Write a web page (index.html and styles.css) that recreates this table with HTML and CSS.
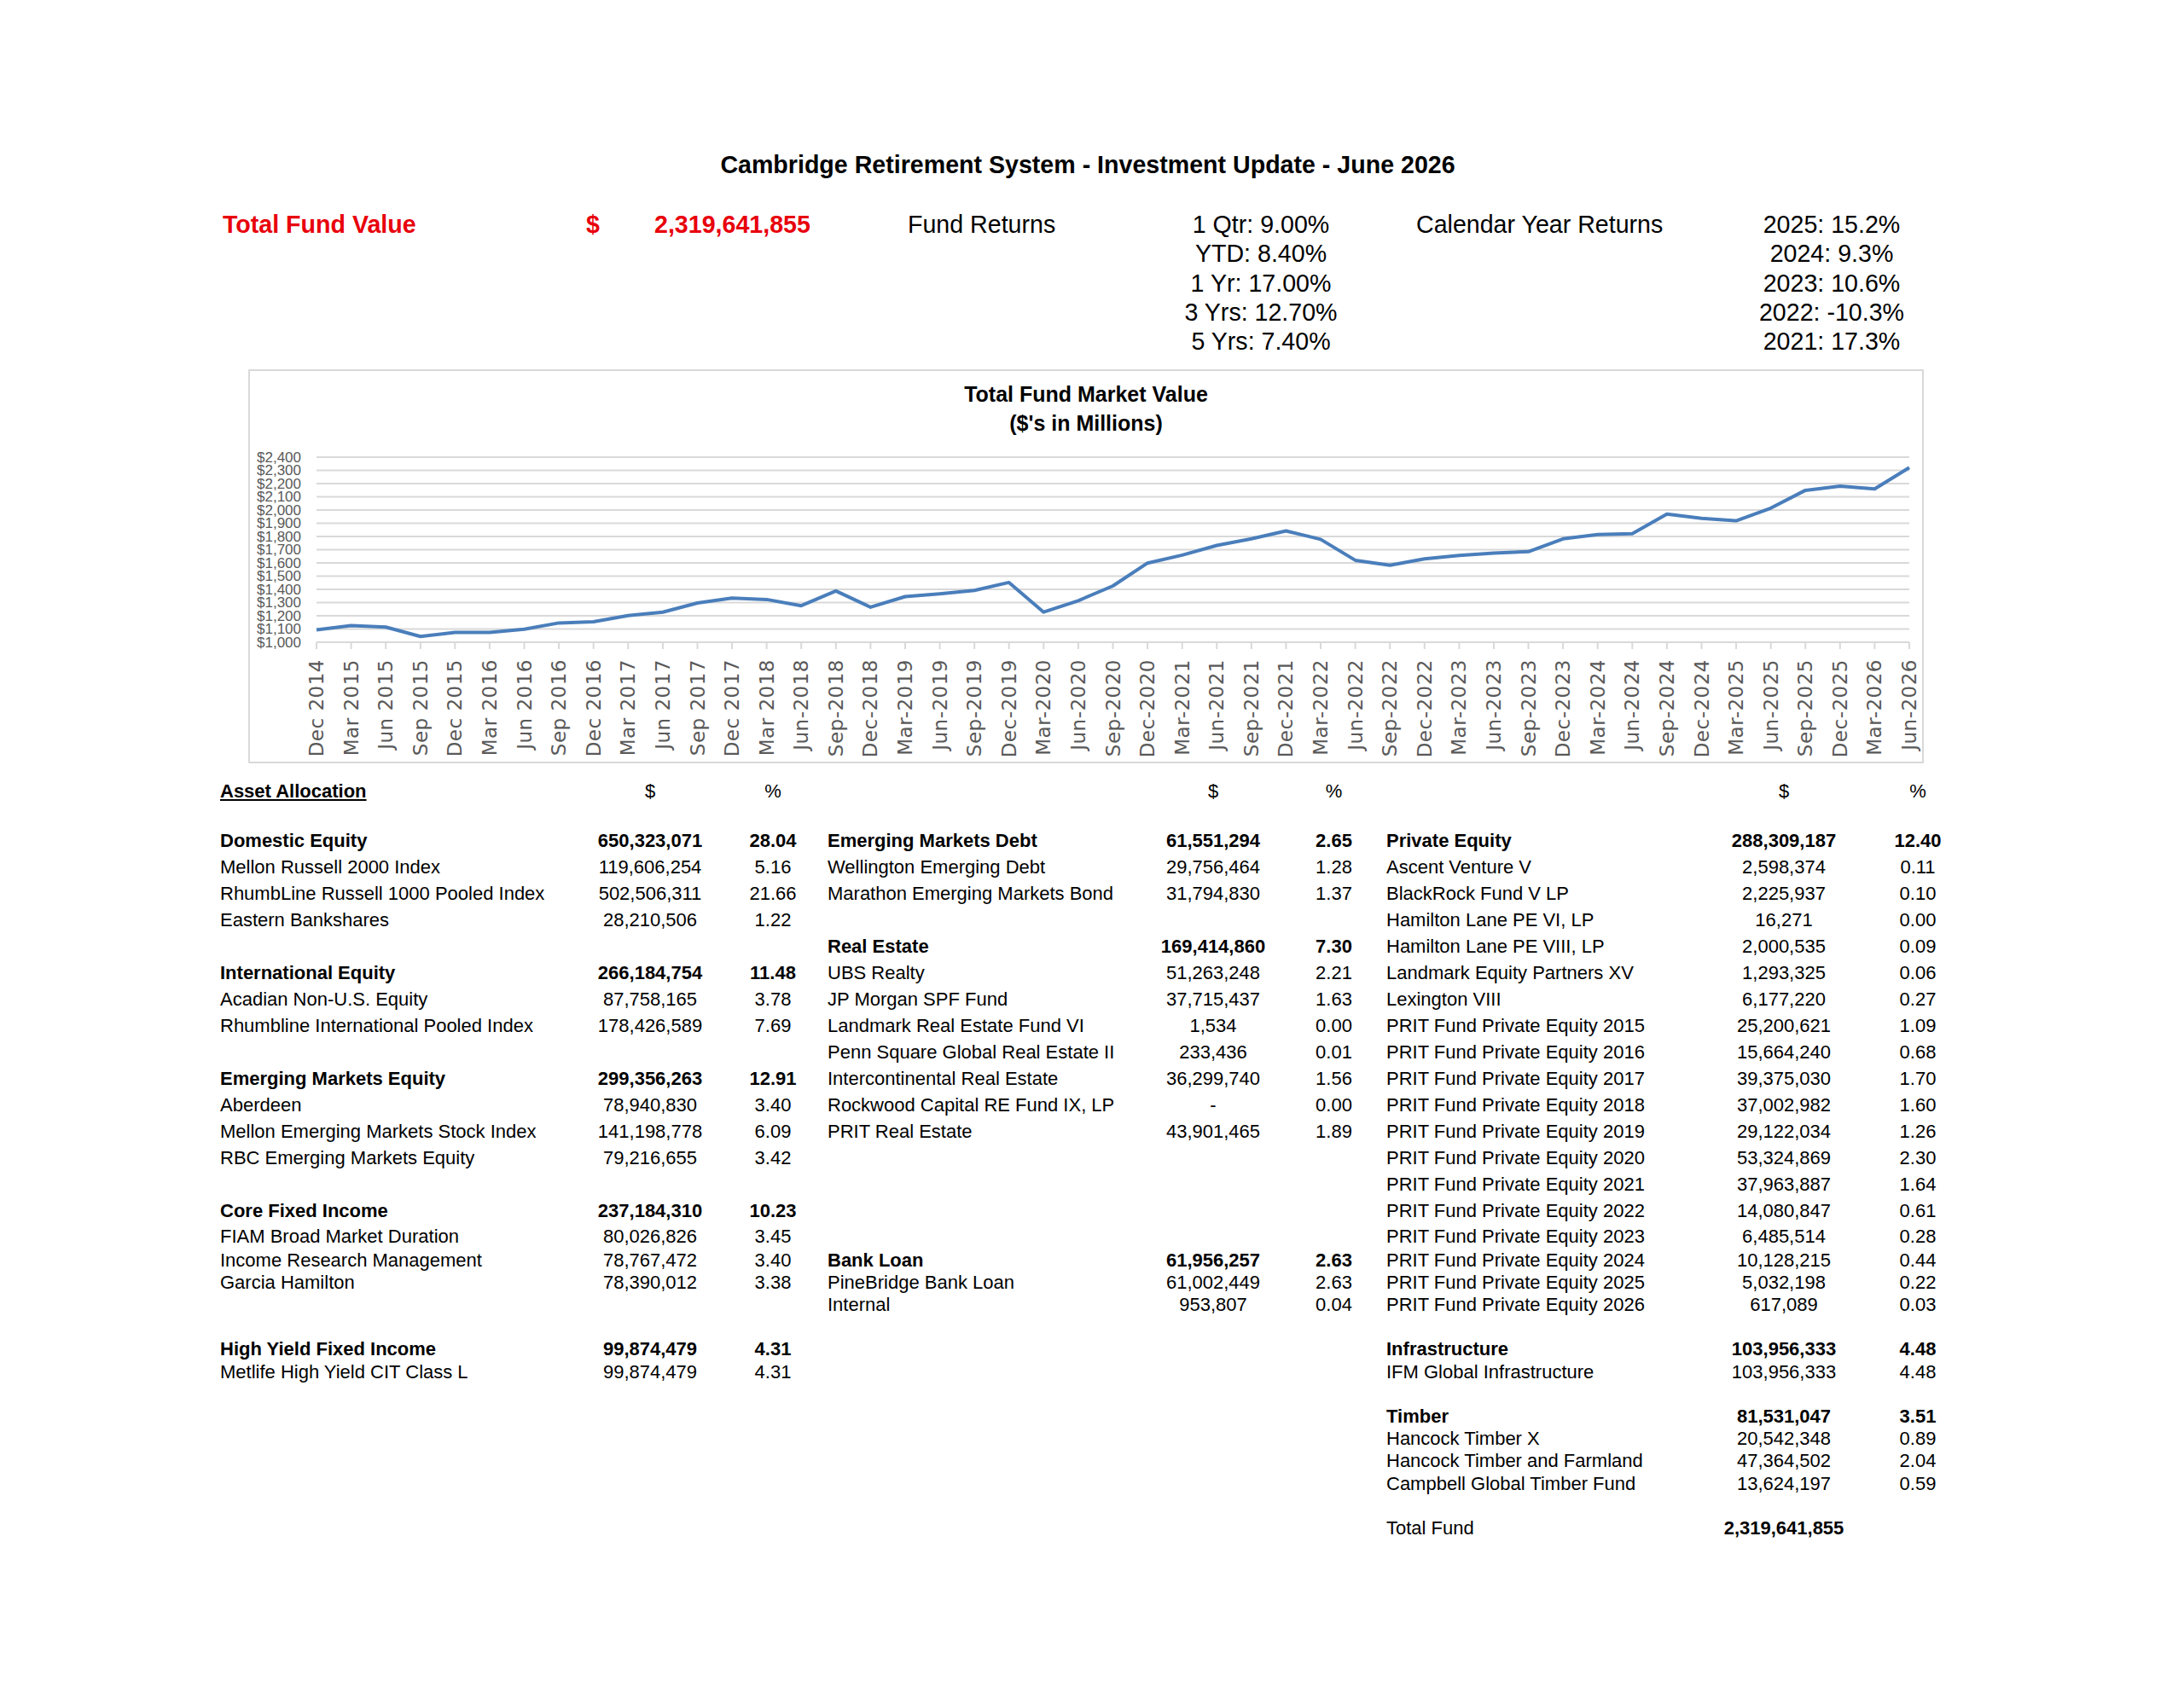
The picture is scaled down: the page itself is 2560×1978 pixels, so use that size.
FILE: index.html
```html
<!DOCTYPE html>
<html lang="en">
<head>
    <meta charset="UTF-8">
    <title>Cambridge Retirement System - Investment Update</title>
    <link rel="stylesheet" href="styles.css">
</head>
<body>
    <h1 class="title">Cambridge Retirement System - Investment Update - June 2026</h1>

    <div class="summary">
        <div class="total-label">Total Fund Value</div>
        <div class="total-cur">$</div>
        <div class="total-num">2,319,641,855</div>
        <div class="ret-label">Fund Returns</div>
        <div class="ret-list fund">
            <div>1 Qtr: 9.00%</div>
            <div>YTD: 8.40%</div>
            <div>1 Yr: 17.00%</div>
            <div>3 Yrs: 12.70%</div>
            <div>5 Yrs: 7.40%</div>
        </div>
        <div class="cal-label">Calendar Year Returns</div>
        <div class="ret-list cal">
            <div>2025: 15.2%</div>
            <div>2024: 9.3%</div>
            <div>2023: 10.6%</div>
            <div>2022: -10.3%</div>
            <div>2021: 17.3%</div>
        </div>
    </div>

    <div class="chart">
        <div class="chart-title">Total Fund Market Value<br>($'s in Millions)</div>
        <svg class="plot" width="1960" height="380" viewBox="0 0 1960 380">
            <g class="grid">
                <line x1="78" x2="1945" y1="23" y2="23"/>
                <line x1="78" x2="1945" y1="38.5" y2="38.5"/>
                <line x1="78" x2="1945" y1="54" y2="54"/>
                <line x1="78" x2="1945" y1="69.5" y2="69.5"/>
                <line x1="78" x2="1945" y1="85" y2="85"/>
                <line x1="78" x2="1945" y1="100.5" y2="100.5"/>
                <line x1="78" x2="1945" y1="116" y2="116"/>
                <line x1="78" x2="1945" y1="131.5" y2="131.5"/>
                <line x1="78" x2="1945" y1="147" y2="147"/>
                <line x1="78" x2="1945" y1="162.5" y2="162.5"/>
                <line x1="78" x2="1945" y1="178" y2="178"/>
                <line x1="78" x2="1945" y1="193.5" y2="193.5"/>
                <line x1="78" x2="1945" y1="209" y2="209"/>
                <line x1="78" x2="1945" y1="224.5" y2="224.5"/>
                <line x1="78" x2="1945" y1="240" y2="240"/>
            </g>
            <g class="ylabels">
                <text x="60" y="23">$2,400</text>
                <text x="60" y="38.5">$2,300</text>
                <text x="60" y="54">$2,200</text>
                <text x="60" y="69.5">$2,100</text>
                <text x="60" y="85">$2,000</text>
                <text x="60" y="100.5">$1,900</text>
                <text x="60" y="116">$1,800</text>
                <text x="60" y="131.5">$1,700</text>
                <text x="60" y="147">$1,600</text>
                <text x="60" y="162.5">$1,500</text>
                <text x="60" y="178">$1,400</text>
                <text x="60" y="193.5">$1,300</text>
                <text x="60" y="209">$1,200</text>
                <text x="60" y="224.5">$1,100</text>
                <text x="60" y="240">$1,000</text>
            </g>
            <g id="ticks" class="ticks"></g>
            <g id="xlabels" class="xlabels"></g>
            <polyline class="series" points="78,225.6 118.6,220.6 159.2,222.3 199.8,233.3 240.3,228.4 280.9,228.4 321.5,224.7 362.1,217.4 402.7,216 443.3,208.7 483.9,204.7 524.5,194 565,188.2 605.6,189.9 646.2,197.2 686.8,179.9 727.4,198.9 768,186.5 808.6,183.3 849.2,179.2 889.7,169.9 930.3,204.7 970.9,191.3 1011.5,174 1052.1,147.2 1092.7,137.9 1133.3,126.5 1173.8,118.8 1214.4,109.5 1255,119.4 1295.6,143.9 1336.2,149.8 1376.8,142.2 1417.4,138.2 1458,135.5 1498.5,133.8 1539.1,118.8 1579.7,113.8 1620.3,112.7 1660.9,89.8 1701.5,94.8 1742.1,97.6 1782.6,82.8 1823.2,61.9 1863.8,56.9 1904.4,60.2 1945,35.2"/>
        </svg>
    </div>

    <div class="alloc">
        <div class="block b1">
            <div class="hd">Asset Allocation</div><div class="num">$</div><div class="num">%</div>
            <div class="gap"></div>
            <div class="b">Domestic Equity</div><div class="num b">650,323,071</div><div class="num b">28.04</div>
            <div>Mellon Russell 2000 Index</div><div class="num">119,606,254</div><div class="num">5.16</div>
            <div>RhumbLine Russell 1000 Pooled Index</div><div class="num">502,506,311</div><div class="num">21.66</div>
            <div>Eastern Bankshares</div><div class="num">28,210,506</div><div class="num">1.22</div>
            <div class="gap"></div>
            <div class="b">International Equity</div><div class="num b">266,184,754</div><div class="num b">11.48</div>
            <div>Acadian Non-U.S. Equity</div><div class="num">87,758,165</div><div class="num">3.78</div>
            <div>Rhumbline International Pooled Index</div><div class="num">178,426,589</div><div class="num">7.69</div>
            <div class="gap"></div>
            <div class="b">Emerging Markets Equity</div><div class="num b">299,356,263</div><div class="num b">12.91</div>
            <div>Aberdeen</div><div class="num">78,940,830</div><div class="num">3.40</div>
            <div>Mellon Emerging Markets Stock Index</div><div class="num">141,198,778</div><div class="num">6.09</div>
            <div>RBC Emerging Markets Equity</div><div class="num">79,216,655</div><div class="num">3.42</div>
            <div class="gap"></div>
            <div class="b">Core Fixed Income</div><div class="num b">237,184,310</div><div class="num b">10.23</div>
            <div>FIAM Broad Market Duration</div><div class="num">80,026,826</div><div class="num">3.45</div>
            <div>Income Research Management</div><div class="num">78,767,472</div><div class="num">3.40</div>
            <div>Garcia Hamilton</div><div class="num">78,390,012</div><div class="num">3.38</div>
            <div class="gap"></div>
            <div class="gap"></div>
            <div class="b">High Yield Fixed Income</div><div class="num b">99,874,479</div><div class="num b">4.31</div>
            <div>Metlife High Yield CIT Class L</div><div class="num">99,874,479</div><div class="num">4.31</div>
        </div>

        <div class="block b2">
            <div></div><div class="num">$</div><div class="num">%</div>
            <div class="gap"></div>
            <div class="b">Emerging Markets Debt</div><div class="num b">61,551,294</div><div class="num b">2.65</div>
            <div>Wellington Emerging Debt</div><div class="num">29,756,464</div><div class="num">1.28</div>
            <div>Marathon Emerging Markets Bond</div><div class="num">31,794,830</div><div class="num">1.37</div>
            <div class="gap"></div>
            <div class="b">Real Estate</div><div class="num b">169,414,860</div><div class="num b">7.30</div>
            <div>UBS Realty</div><div class="num">51,263,248</div><div class="num">2.21</div>
            <div>JP Morgan SPF Fund</div><div class="num">37,715,437</div><div class="num">1.63</div>
            <div>Landmark Real Estate Fund VI</div><div class="num">1,534</div><div class="num">0.00</div>
            <div>Penn Square Global Real Estate II</div><div class="num">233,436</div><div class="num">0.01</div>
            <div>Intercontinental Real Estate</div><div class="num">36,299,740</div><div class="num">1.56</div>
            <div>Rockwood Capital RE Fund IX, LP</div><div class="num">-</div><div class="num">0.00</div>
            <div>PRIT Real Estate</div><div class="num">43,901,465</div><div class="num">1.89</div>
            <div class="gap"></div>
            <div class="gap"></div>
            <div class="gap"></div>
            <div class="gap"></div>
            <div class="b">Bank Loan</div><div class="num b">61,956,257</div><div class="num b">2.63</div>
            <div>PineBridge Bank Loan</div><div class="num">61,002,449</div><div class="num">2.63</div>
            <div>Internal</div><div class="num">953,807</div><div class="num">0.04</div>
        </div>

        <div class="block b3">
            <div></div><div class="num">$</div><div class="num">%</div>
            <div class="gap"></div>
            <div class="b">Private Equity</div><div class="num b">288,309,187</div><div class="num b">12.40</div>
            <div>Ascent Venture V</div><div class="num">2,598,374</div><div class="num">0.11</div>
            <div>BlackRock Fund V LP</div><div class="num">2,225,937</div><div class="num">0.10</div>
            <div>Hamilton Lane PE VI, LP</div><div class="num">16,271</div><div class="num">0.00</div>
            <div>Hamilton Lane PE VIII, LP</div><div class="num">2,000,535</div><div class="num">0.09</div>
            <div>Landmark Equity Partners XV</div><div class="num">1,293,325</div><div class="num">0.06</div>
            <div>Lexington VIII</div><div class="num">6,177,220</div><div class="num">0.27</div>
            <div>PRIT Fund Private Equity 2015</div><div class="num">25,200,621</div><div class="num">1.09</div>
            <div>PRIT Fund Private Equity 2016</div><div class="num">15,664,240</div><div class="num">0.68</div>
            <div>PRIT Fund Private Equity 2017</div><div class="num">39,375,030</div><div class="num">1.70</div>
            <div>PRIT Fund Private Equity 2018</div><div class="num">37,002,982</div><div class="num">1.60</div>
            <div>PRIT Fund Private Equity 2019</div><div class="num">29,122,034</div><div class="num">1.26</div>
            <div>PRIT Fund Private Equity 2020</div><div class="num">53,324,869</div><div class="num">2.30</div>
            <div>PRIT Fund Private Equity 2021</div><div class="num">37,963,887</div><div class="num">1.64</div>
            <div>PRIT Fund Private Equity 2022</div><div class="num">14,080,847</div><div class="num">0.61</div>
            <div>PRIT Fund Private Equity 2023</div><div class="num">6,485,514</div><div class="num">0.28</div>
            <div>PRIT Fund Private Equity 2024</div><div class="num">10,128,215</div><div class="num">0.44</div>
            <div>PRIT Fund Private Equity 2025</div><div class="num">5,032,198</div><div class="num">0.22</div>
            <div>PRIT Fund Private Equity 2026</div><div class="num">617,089</div><div class="num">0.03</div>
            <div class="gap"></div>
            <div class="b">Infrastructure</div><div class="num b">103,956,333</div><div class="num b">4.48</div>
            <div>IFM Global Infrastructure</div><div class="num">103,956,333</div><div class="num">4.48</div>
            <div class="gap"></div>
            <div class="b">Timber</div><div class="num b">81,531,047</div><div class="num b">3.51</div>
            <div>Hancock Timber X</div><div class="num">20,542,348</div><div class="num">0.89</div>
            <div>Hancock Timber and Farmland</div><div class="num">47,364,502</div><div class="num">2.04</div>
            <div>Campbell Global Timber Fund</div><div class="num">13,624,197</div><div class="num">0.59</div>
            <div class="gap"></div>
            <div>Total Fund</div><div class="num b">2,319,641,855</div><div></div>
        </div>
    </div>

    <script>
        // quarter-end labels under the chart, one per data point
        const months = ["Mar", "Jun", "Sep", "Dec"];
        let labels = ["Dec 2014"];
        for (let year = 2015; year <= 2026; year++) {
            for (let q = 0; q < 4; q++) {
                if (year === 2026 && q > 1) break;
                let sep = (year < 2018 || (year === 2018 && q === 0)) ? " " : "-";
                labels.push(months[q] + sep + year);
            }
        }

        const ns = "http://www.w3.org/2000/svg";
        const ticks = document.getElementById("ticks");
        const xlabels = document.getElementById("xlabels");
        labels.forEach((label, i) => {
            let x = (78 + i * 40.587).toFixed(1);
            let tick = document.createElementNS(ns, "line");
            tick.setAttribute("x1", x);
            tick.setAttribute("x2", x);
            tick.setAttribute("y1", 240);
            tick.setAttribute("y2", 248);
            ticks.appendChild(tick);

            let text = document.createElementNS(ns, "text");
            text.setAttribute("transform", "translate(" + x + ",260) rotate(-90)");
            text.textContent = label;
            xlabels.appendChild(text);
        });
    </script>
</body>
</html>
```

FILE: styles.css
```css
body {
    margin: 0;
    background: #fff;
    color: #000;
    font-family: "Liberation Sans", Arial, sans-serif;
}

.title {
    margin: 176px 10px 0 0;
    font-size: 28.6px;
    line-height: 34px;
    font-weight: bold;
    text-align: center;
}

/* header row with the total and the returns */
.summary {
    display: flex;
    margin: 36px 0 0 261px;
    font-size: 28.6px;
    line-height: 34.3px;
    white-space: nowrap;
}
.total-label, .total-cur, .total-num { color: #e8000b; font-weight: bold; }
.total-label { width: 426px; }
.total-cur { width: 80px; }
.total-num { width: 297px; }
.ret-label { width: 232px; }
.ret-list { text-align: center; }
.ret-list.fund { width: 364px; }
.cal-label { width: 387px; }
.ret-list.cal { width: 200px; }

/* chart */
.chart {
    box-sizing: border-box;
    width: 1964px;
    height: 462px;
    margin: 16px 0 0 291px;
    border: 2px solid #d9d9d9;
}
.chart-title {
    padding-top: 10px;
    font-size: 25px;
    line-height: 34px;
    font-weight: bold;
    text-align: center;
}
.plot { display: block; }
.grid line, .ticks line { stroke: #d9d9d9; stroke-width: 2; }
.ylabels text {
    font-family: "Liberation Sans", Arial, sans-serif;
    font-size: 17px;
    fill: #595959;
    text-anchor: end;
    dominant-baseline: central;
}
.xlabels text {
    font-family: "DejaVu Sans", sans-serif;
    font-size: 23px;
    letter-spacing: 0.5px;
    fill: #595959;
    text-anchor: end;
    dominant-baseline: central;
}
.series {
    fill: none;
    stroke: #4a7ebb;
    stroke-width: 4;
    stroke-linejoin: round;
}

/* asset allocation table */
.alloc {
    display: flex;
    margin: 17px 0 0 258px;
    font-size: 22px;
    white-space: nowrap;
}
.block {
    display: grid;
    grid-template-rows: 31px 27.5px repeat(15, 31px) 28.6px repeat(13, 26.2px);
    align-items: center;
}
.b1 { grid-template-columns: 424px 160px 128px; }
.b2 { grid-template-columns: 372px 160px 123px; }
.b3 { grid-template-columns: 386px 160px 154px; }
.gap { grid-column: 1 / -1; }
.num { text-align: center; }
.b { font-weight: bold; }
.hd { font-weight: bold; text-decoration: underline; }
```
